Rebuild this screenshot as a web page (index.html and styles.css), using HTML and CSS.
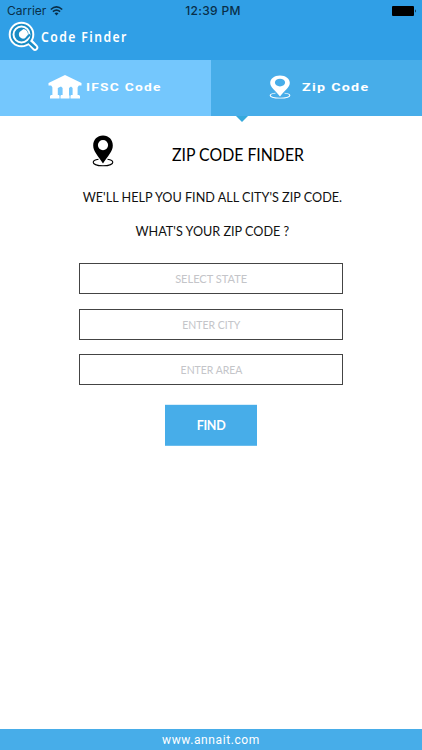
FILE: index.html
```html
<!DOCTYPE html>
<html lang="en">
<head>
<meta charset="utf-8">
<title>Code Finder</title>
<link rel="stylesheet" href="styles.css">
</head>
<body>
<svg width="0" height="0" class="defs">
  <symbol id="pin" viewBox="0 0 22 32">
    <path fill-rule="evenodd" fill="currentColor" d="M11 0.5C5.200 0.500 1.200 4.800 1.200 10.400C1.200 16.400 6 20.500 11 28.500C16 20.500 20.800 16.400 20.800 10.400C20.800 4.800 16.800 0.500 11 0.500ZM11 5A5.100 5.100 0 1 1 11 15.200A5.100 5.100 0 1 1 11 5Z"/>
    <path fill="none" stroke="currentColor" stroke-width="1.1" d="M6.500 24.200C3.200 24.700 1.200 25.800 1.200 27.200C1.200 29.300 5.500 30.800 11 30.800C16.500 30.800 20.800 29.300 20.800 27.200C20.800 25.800 18.800 24.700 15.500 24.200"/>
  </symbol>
</svg>
<div class="app">
  <header class="header">
    <div class="status">
      <div class="carrier"><span class="carrier-name">Carrier</span>
        <svg class="wifi" width="13" height="10" viewBox="0 0 13 10"><g fill="none" stroke="#092f49" stroke-width="1.6"><path d="M0.8 3.5Q6.5 -1.7 12.2 3.5"/><path d="M2.9 5.7Q6.5 2.5 10.1 5.7"/></g><path fill="#092f49" d="M4.5 7.2Q6.5 5.6 8.5 7.2L6.5 9.4Z"/></svg>
      </div>
      <div class="time">12:39 PM</div>
      <svg class="battery" width="25" height="10" viewBox="0 0 25 10"><rect width="22" height="10" rx="1"/><path d="M23 3.3Q24.6 5 23 6.7Z"/></svg>
    </div>
    <div class="brand">
      <svg width="31" height="31" viewBox="0 0 31 31">
        <path d="M21 20L27 26.500" stroke="#fff" stroke-width="6.5" stroke-linecap="round"/>
        <circle cx="13.500" cy="13.500" r="11.800" fill="#188cc5" stroke="#fff" stroke-width="2"/>
        <path d="M20.500 20.500L27 26.500" stroke="#188cc5" stroke-width="2.600" stroke-linecap="round"/>
        <circle cx="13.500" cy="13.500" r="8" fill="none" stroke="#fff" stroke-width="2"/>
        <path d="M15.500 8A5 5 0 0 1 19.500 15L16.500 17.500C12.500 18.500 9.500 14.500 11.500 11Z" fill="#fff"/>
        <path d="M18.500 17L22 13.500" stroke="#188cc5" stroke-width="2"/>
      </svg>
      <span class="brand-name">Code Finder</span>
    </div>
  </header>
  <nav class="tabs">
    <div class="tab tab-ifsc">
      <svg width="34" height="24" viewBox="0 0 34 24" fill="#fff"><path d="M17 0L33.500 8V10.500H.5V8Z"/><path d="M3 10h28l-1.400 2.500V20H31v1h-8v-1h1.600v-7l-1.600-1.500-2 1.500V20H21v1h-8v-1h1.600v-7L13 11.500 9.800 13V20H11v1H3v-1h1.400v-7.500Z"/><path d="M2 20.500h9.500v3H2ZM12.500 20.500h9v3h-9ZM22.500 20.500H32v3h-9.500Z"/></svg>
      <span class="tab-label">IFSC Code</span>
    </div>
    <div class="tab tab-zip">
      <svg width="22" height="24" preserveAspectRatio="none" viewBox="0 0 22 32"><use href="#pin" width="22" height="32"/></svg>
      <span class="tab-label">Zip Code</span>
    </div>
  </nav>
  <main class="content">
    <div class="title-row">
      <svg width="22" height="32"><use href="#pin" width="22" height="32"/></svg>
      <h1 class="title">ZIP CODE FINDER</h1>
    </div>
    <p class="lead">WE'LL HELP YOU FIND ALL CITY'S ZIP CODE.</p>
    <p class="lead">WHAT'S YOUR ZIP CODE ?</p>
    <form class="form">
      <div class="field"><span class="placeholder state">SELECT STATE</span></div>
      <div class="field"><span class="placeholder">ENTER CITY</span></div>
      <div class="field"><span class="placeholder">ENTER AREA</span></div>
      <button class="find" type="button">FIND</button>
    </form>
  </main>
  <footer class="footer">www.annait.com</footer>
</div>
</body>
</html>
```
FILE: styles.css
```css
* { box-sizing: border-box; }
body { margin: 0; background: #fff; font-family: Lato, sans-serif; color: #111; }
.defs { position: absolute; }
.app { width: 422px; height: 750px; display: flex; flex-direction: column; overflow: hidden; }
svg { display: block; flex: none; }
.header { height: 60px; background: #309fe6; flex: none; }
.status { height: 21px; display: grid; grid-template-columns: 1fr auto 1fr; padding: 0 5px 0 7px; align-items: center; font: 12px/21px Inter, sans-serif; color: #092f49; }
.carrier { display: flex; align-items: center; gap: 4px; }
.time { font-weight: 500; letter-spacing: 0.3px; padding-left: 2px; }
.battery { justify-self: end; }
.brand { display: flex; align-items: center; gap: 2px; padding-left: 8px; height: 31px; }
.brand-name { color: #fff; font: 600 14.5px/28px "Noto Sans", sans-serif; letter-spacing: 1.7px; transform: scaleX(0.84); transform-origin: left; padding-bottom: 2px; }
.tabs { height: 56px; display: flex; flex: none; }
.tab { width: 211px; display: flex; align-items: center; color: #fff; position: relative; }
.tab-label { font: 700 11px/20px Roboto, sans-serif; letter-spacing: 1px; transform: scaleX(1.295); transform-origin: left; white-space: nowrap; padding-top: 3px; }
.tab-ifsc .tab-label { transform: scaleX(1.25); }
.tab-ifsc { background: #74c7fd; padding: 0 0 3px 48px; gap: 4px; }
.tab-zip { background: #47ade9; padding: 0 0 3px 58px; gap: 11px; }
.tab-zip::after { content: ""; position: absolute; left: 25px; top: 56px; border: 6px solid transparent; border-top-color: #35a9dc; border-bottom: 0; }
.content { flex: 1; padding-top: 18px; }
.title-row { display: flex; align-items: center; padding-left: 92px; gap: 58px; height: 34px; color: #000; }
.title { margin: 0; font-size: 17.5px; font-weight: 400; line-height: 24px; padding-top: 7px; white-space: nowrap; transform: scaleX(0.905); transform-origin: left; }
.lead { margin: 0; height: 34px; line-height: 34px; font-size: 13.8px; text-align: center; white-space: nowrap; padding-left: 3px; transform: scaleX(0.916); }
.title-row + .lead { margin-top: 12px; }
.form { display: flex; flex-direction: column; align-items: center; gap: 14.6px; padding-top: 15px; }
.field { width: 264px; height: 31px; border: 1px solid #444; text-align: center; font-size: 12px; line-height: 29px; color: #c4c5c9; }
.placeholder { display: inline-block; transform: scaleX(0.87); }
.placeholder.state { transform: scaleX(0.92); }
.find { width: 92px; height: 41px; margin-top: 5px; padding: 0; border: 0; background: #47ade9; color: #fff; font: 700 12.5px Lato, sans-serif; letter-spacing: -0.3px; transform: translateY(-0.2px); }
.footer { height: 21px; background: #47ade9; color: #fff; text-align: center; font: 12px/23px Roboto, sans-serif; letter-spacing: 0.6px; }
```
